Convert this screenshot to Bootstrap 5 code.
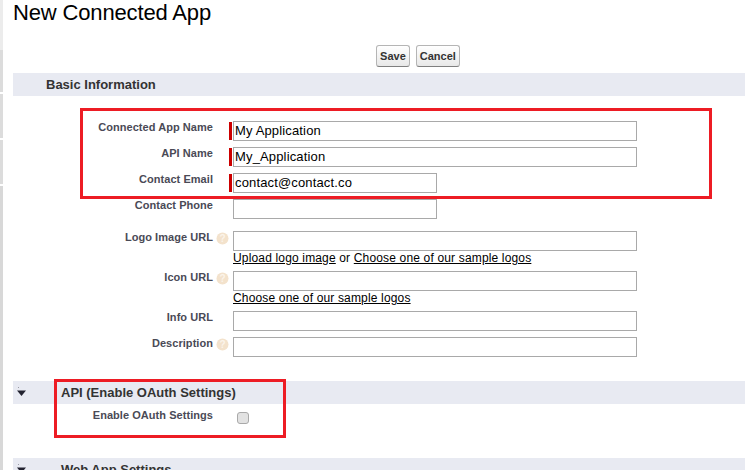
<!DOCTYPE html>
<html lang="en"><head><meta charset="utf-8"><title>New Connected App</title>
<link href="https://cdn.jsdelivr.net/npm/bootstrap@5.3.0/dist/css/bootstrap.min.css" rel="stylesheet">
<style>
html,body{height:470px;overflow:hidden}
body{font-family:"Liberation Sans",Arial,sans-serif;background:#fff;color:#000;position:relative}
.app-edge{width:3px;flex:none;background:linear-gradient(#ececec 0 50px,#dcdcdc 50px 92px,#fff 92px 94px,#dcdcdc 94px 138px,#fff 138px 140px,#dcdcdc 140px 184px,#fff 184px 186px,#d8d8d8 186px)}
.app-main{padding-left:10px;min-width:0;flex:1}
.app-title{font-size:22px;font-weight:400;line-height:25px;letter-spacing:-.15px;margin:0;height:45px}
.app-actions{height:28px;padding-left:78px;gap:6px}
.app-btn{font:bold 11px "Liberation Sans",Arial,sans-serif;color:#333;background:linear-gradient(#fff,#e8e8e8);border:1px solid #b5b5b5;border-bottom-color:#7f7f7f;border-radius:3px;height:22px;padding:0 3px;line-height:20px}
.app-section{background:#e8eaf2;height:23px;font-weight:700;font-size:13px;color:#333;line-height:23px}
.app-section-name{margin-left:33px}
.app-twist{width:48px;flex:none;padding:6px 0 0 3px;line-height:0}
.app-fields{padding-top:25px}
.app-fields-api{padding-top:5px;height:54px}
.app-field{margin-bottom:6px}
.app-field-gap{margin-top:12px}
.app-label{width:200px;flex:none;text-align:right;font-size:11px;font-weight:700;color:#4a4a56;line-height:14px;letter-spacing:.05px;margin-top:-1px}
.app-help{width:20px;flex:none;padding:1px 0 0 3px;line-height:0}
.app-help svg{display:block}
.app-req{width:3px;height:18px;background:#c00;margin-left:-4px;margin-right:1px;flex:none;margin-top:1px}
.app-input{height:20px;border:1px solid #a9a9a9;font:13px/18px "Liberation Sans",Arial,sans-serif;letter-spacing:.15px;color:#000;padding:0 1px 2px;border-radius:0;outline:0;background:#fff;display:block}
.app-w-lg{width:404px}
.app-w-sm{width:204px}
.app-links{font-size:12px;line-height:14px;letter-spacing:.16px;color:#000}
.app-links a{color:#000;text-decoration:underline}
.app-check{width:12px;height:12px;margin:3px 0 0 4px;border:1px solid #a9a9a9;border-radius:3px;background:#e2e2e2;appearance:none;display:block}
.app-section-api{margin-top:24px}
.app-mark{position:absolute;border:3px solid #ed1c24;pointer-events:none}
.app-mark-a{left:80px;top:108px;width:632px;height:91px}
.app-mark-b{left:54px;top:379px;width:232px;height:59px}
</style></head>
<body class="d-flex">
<div class="app-edge"></div>
<main class="app-main">
<h1 class="app-title">New Connected App</h1>
<div class="app-actions d-flex justify-content-center">
<button class="app-btn" type="button">Save</button>
<button class="app-btn" type="button">Cancel</button>
</div>
<div class="app-section d-flex"><span class="app-section-name">Basic Information</span></div>
<div class="app-fields">
<div class="app-field d-flex"><div class="app-label">Connected App Name</div><div class="app-help"></div><div class="app-req"></div><input class="app-input app-w-lg" value="My Application"></div>
<div class="app-field d-flex"><div class="app-label">API Name</div><div class="app-help"></div><div class="app-req"></div><input class="app-input app-w-lg" value="My_Application"></div>
<div class="app-field d-flex"><div class="app-label">Contact Email</div><div class="app-help"></div><div class="app-req"></div><input class="app-input app-w-sm" value="contact@contact.co"></div>
<div class="app-field d-flex"><div class="app-label">Contact Phone</div><div class="app-help"></div><input class="app-input app-w-sm"></div>
<div class="app-field app-field-gap d-flex"><div class="app-label">Logo Image URL</div><div class="app-help"><svg width="13" height="13" viewBox="0 0 13 13"><circle cx="6.500" cy="6.500" r="6" fill="#f3e2cc"/><text x="6.500" y="10" text-anchor="middle" font-size="10" font-weight="700" fill="#fbf4ea" font-family="Liberation Sans">?</text></svg></div><div><input class="app-input app-w-lg"><div class="app-links"><a href="#">Upload logo image</a> or <a href="#">Choose one of our sample logos</a></div></div></div>
<div class="app-field d-flex"><div class="app-label">Icon URL</div><div class="app-help"><svg width="13" height="13" viewBox="0 0 13 13"><circle cx="6.500" cy="6.500" r="6" fill="#f3e2cc"/><text x="6.500" y="10" text-anchor="middle" font-size="10" font-weight="700" fill="#fbf4ea" font-family="Liberation Sans">?</text></svg></div><div><input class="app-input app-w-lg"><div class="app-links"><a href="#">Choose one of our sample logos</a></div></div></div>
<div class="app-field d-flex"><div class="app-label">Info URL</div><div class="app-help"></div><input class="app-input app-w-lg"></div>
<div class="app-field d-flex"><div class="app-label">Description</div><div class="app-help"><svg width="13" height="13" viewBox="0 0 13 13"><circle cx="6.500" cy="6.500" r="6" fill="#f3e2cc"/><text x="6.500" y="10" text-anchor="middle" font-size="10" font-weight="700" fill="#fbf4ea" font-family="Liberation Sans">?</text></svg></div><input class="app-input app-w-lg"></div>
</div>
<div class="app-section app-section-api d-flex"><div class="app-twist"><svg width="11" height="10" viewBox="0 0 11 10"><rect x="2" y="0" width="1" height="1" fill="#9a9aa5"/><path d="M1 3.500h9L5.500 9z" fill="#222230"/></svg></div><span>API (Enable OAuth Settings)</span></div>
<div class="app-fields app-fields-api">
<div class="app-field d-flex"><div class="app-label">Enable OAuth Settings</div><div class="app-help"></div><input type="checkbox" class="app-check"></div>
</div>
<div class="app-section d-flex"><div class="app-twist"><svg width="11" height="10" viewBox="0 0 11 10"><rect x="2" y="0" width="1" height="1" fill="#9a9aa5"/><path d="M1 3.500h9L5.500 9z" fill="#222230"/></svg></div><span>Web App Settings</span></div>
</main>
<div class="app-mark app-mark-a"></div>
<div class="app-mark app-mark-b"></div>
<script src="https://cdn.jsdelivr.net/npm/bootstrap@5.3.0/dist/js/bootstrap.bundle.min.js"></script>
</body></html>
